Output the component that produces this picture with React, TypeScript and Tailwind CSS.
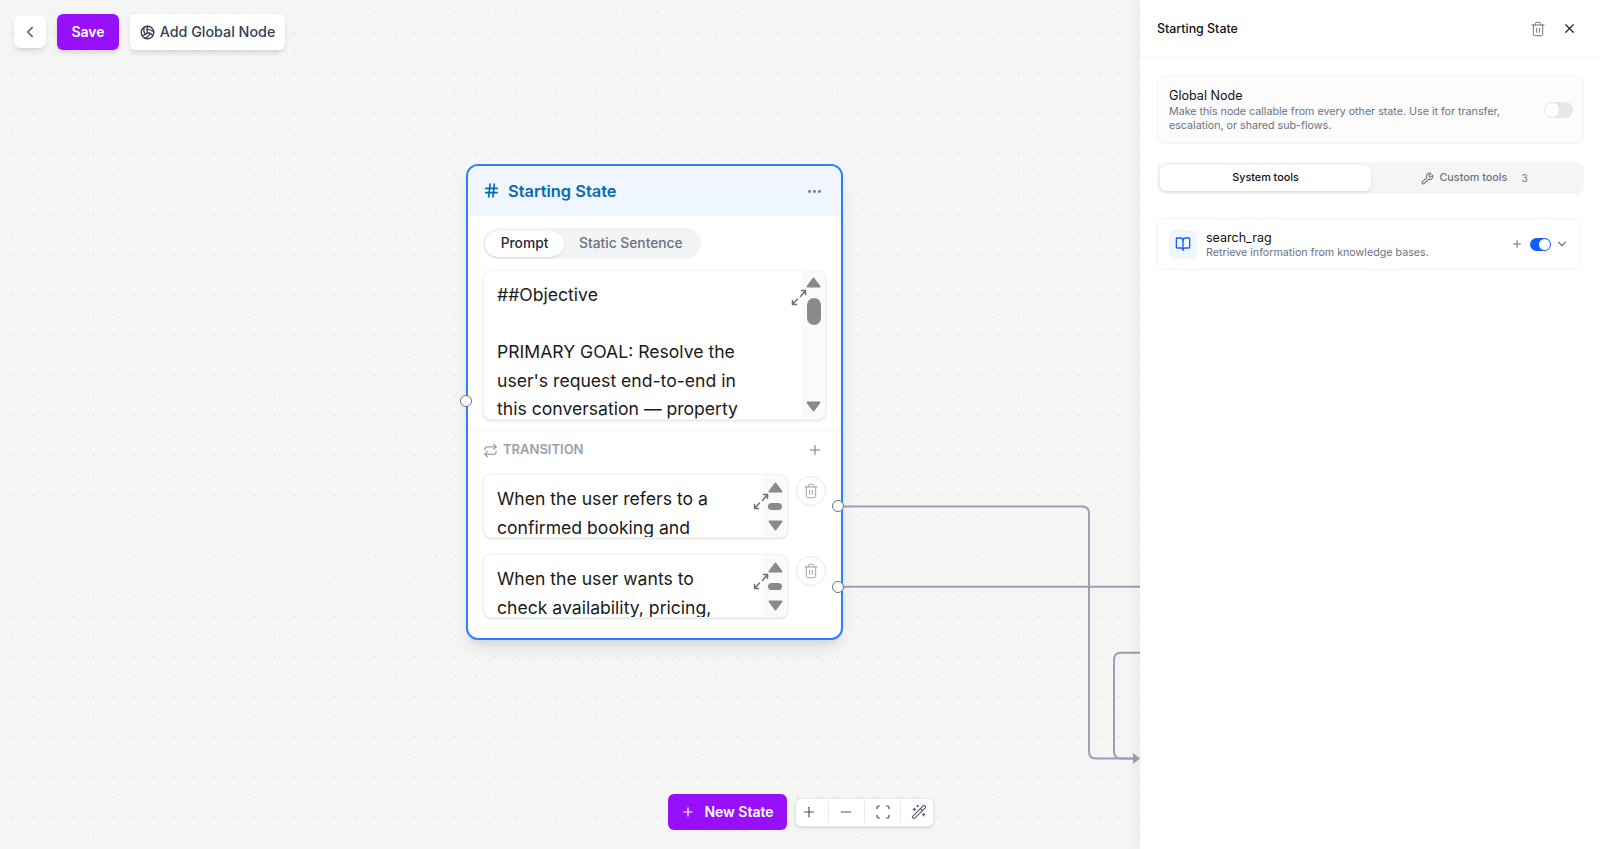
import { BookOpen, ChevronDown, ChevronLeft, Ellipsis, Hash, Minus, Plus, Repeat, Scan, Trash2, Volleyball, WandSparkles, Wrench, X } from "lucide-react";

const font = "font-['Inter','Liberation_Sans',sans-serif]";

function ExpandIcon() {
  return (
    <svg className="absolute right-[18px] top-[18px]" width="16" height="17" viewBox="0 0 16 17" fill="none" stroke="#707070" strokeWidth="1.5" strokeLinecap="round" strokeLinejoin="round">
      <path d="M9.500 7.500L14.500 1.500M10.500 1.500h4v4" />
      <path d="M6.500 10L1.500 15.500M1.500 11.500v4h4" />
    </svg>
  );
}

function Arrow({ down }: { down?: boolean }) {
  return (
    <svg width="15" height="11" viewBox="0 0 15 11" className={down ? "rotate-180" : ""}>
      <path d="M7.500 1.500L13.500 9.500H1.500z" fill="#8a8a8a" stroke="#8a8a8a" strokeWidth="2" strokeLinejoin="round" />
    </svg>
  );
}

function TransitionRow({ lines }: { lines: string[] }) {
  return (
    <div className="flex gap-[8px]">
      <div className="relative flex h-[64px] w-[305px] overflow-hidden rounded-lg border border-gray-100 bg-white shadow-sm">
        <div className="flex-1 px-[13px] pt-[10px] text-[17.6px] leading-[28.5px] text-[#1a1a1a]">
          {lines.map((l) => (
            <div key={l} className="whitespace-nowrap">{l}</div>
          ))}
        </div>
        <div className="flex h-full w-[24px] shrink-0 flex-col items-center bg-[#fafafa] pt-[7px]">
          <Arrow />
          <div className="mt-[10px] h-[7px] w-[14px] rounded-full bg-[#8a8a8a]" />
          <div className="mt-[10px]"><Arrow down /></div>
        </div>
        <ExpandIcon />
      </div>
      <div className="mt-[2px] flex h-[30px] w-[30px] items-center justify-center rounded-full border border-gray-200 bg-white">
        <Trash2 size={16} className="text-gray-400" strokeWidth={1.5} />
      </div>
    </div>
  );
}

function Handle({ className }: { className: string }) {
  return <div className={`absolute h-3 w-3 rounded-full border border-gray-500 bg-white ${className}`} />;
}

function StateNode() {
  return (
    <div className="absolute left-[466px] top-[164px] h-[476px] w-[377px] rounded-xl border-2 border-[#2b7fff] bg-white shadow-lg">
      <div className="flex h-[50px] items-center justify-between rounded-t-[10px] bg-[#eff6ff] pl-[15px] pr-[18px]">
        <div className="flex items-center gap-[8px] text-[#0a6ab0]">
          <Hash size={17} strokeWidth={2.4} />
          <span className="text-[16.4px] font-semibold">Starting State</span>
        </div>
        <Ellipsis size={17} className="text-gray-500" />
      </div>

      <div className="px-[15px] pt-3">
        <div className="flex h-[31px] w-[218px] items-center rounded-full bg-gray-100 px-[2px] text-[13.8px] font-medium">
          <div className="flex h-[26px] w-[79px] items-center justify-center rounded-full bg-white text-[#1f2937] shadow">Prompt</div>
          <div className="pl-[15px] text-gray-500">Static Sentence</div>
        </div>

        <div className="relative mt-[11px] flex h-[150px] overflow-hidden rounded-lg border border-gray-100 bg-white shadow-sm">
          <div className="flex-1 px-[13px] pt-[10px] text-[17.6px] leading-[28.5px] text-[#1a1a1a]">
            <div>##Objective</div>
            <div className="h-[28.5px]" />
            <div className="whitespace-nowrap">PRIMARY GOAL: Resolve the</div>
            <div className="whitespace-nowrap">user's request end-to-end in</div>
            <div className="whitespace-nowrap">this conversation — property</div>
          </div>
          <div className="flex h-full w-[23px] shrink-0 flex-col items-center bg-[#fafafa] pb-[7px] pt-[6px]">
            <Arrow />
            <div className="mb-auto mt-[10px] h-[27px] w-[14px] rounded-full bg-[#8a8a8a]" />
            <Arrow down />
          </div>
          <ExpandIcon />
        </div>
      </div>

      <div className="mt-[10px] border-t border-gray-100 px-[15px]">
        <div className="flex h-[36px] items-center justify-between pt-[2px]">
          <div className="flex items-center gap-[5px] text-[13px] font-semibold text-gray-400">
            <Repeat size={15} />
            TRANSITION
          </div>
          <Plus size={16} className="mr-[3px] text-gray-500" strokeWidth={1.5} />
        </div>
        <div className="mt-[7px] flex flex-col gap-[16px]">
          <TransitionRow lines={["When the user refers to a", "confirmed booking and"]} />
          <TransitionRow lines={["When the user wants to", "check availability, pricing,"]} />
        </div>
      </div>

      <Handle className="left-[-8px] top-[229px]" />
      <Handle className="right-[-3px] top-[334px]" />
      <Handle className="right-[-3px] top-[415px]" />
    </div>
  );
}

function Edges() {
  return (
    <svg className="absolute left-0 top-0" width="1140" height="849" fill="none" stroke="#98a2b3" strokeWidth="2">
      <path d="M844 506.500H1082q7 0 7 7V751.500q0 7 7 7H1134" />
      <path d="M844 586.700H1140" />
      <path d="M1140 652.700H1121q-7 0 -7 7V751.500q0 7 7 7H1134" />
      <path d="M1133 753l7 5.500l-7 5.500z" fill="#98a2b3" stroke="none" />
    </svg>
  );
}

function Canvas() {
  return (
    <div className="relative flex-1 overflow-hidden bg-[#f5f5f5] bg-[radial-gradient(#d4d4d4_0.7px,transparent_1px)] bg-[size:20.11px_20.11px] bg-[position:3px_3px]">
      <Edges />
      <StateNode />

      <div className="absolute left-[14px] top-[14px] flex items-start gap-[11px]">
        <button className="mt-[2px] flex h-8 w-8 items-center justify-center rounded-md bg-white shadow-md">
          <ChevronLeft size={18} className="text-gray-600" />
        </button>
        <button className="h-[36px] w-[62px] rounded-md bg-[#9810fa] text-sm font-semibold text-white shadow-md">Save</button>
        <button className="flex h-[36px] w-[155px] items-center justify-center gap-[5px] rounded-md bg-white text-[14.3px] font-medium text-[#314158] shadow-md">
          <Volleyball size={15} strokeWidth={2.2} className="text-gray-700" />
          Add Global Node
        </button>
      </div>

      <div className="absolute left-[668px] top-[794px] flex items-center gap-2">
        <button className="flex h-[36px] w-[119px] items-center justify-center gap-[9px] rounded-md bg-[#9810fa] text-sm font-semibold text-white">
          <Plus size={14} />
          New State
        </button>
        <div className="flex h-[29px] w-[139px] items-center rounded-md border border-gray-200 bg-white shadow-sm">
          <div className="flex w-[32px] justify-center pr-[6px]"><Plus size={16} strokeWidth={1.8} className="text-gray-600" /></div>
          <div className="h-[22px] w-px bg-gray-200" />
          <div className="flex w-[35px] justify-center pr-[2px]"><Minus size={16} strokeWidth={1.8} className="text-gray-600" /></div>
          <div className="h-[22px] w-px bg-gray-200" />
          <div className="flex w-[35px] justify-center"><Scan size={16} strokeWidth={1.8} className="text-gray-600" /></div>
          <div className="h-[22px] w-px bg-gray-200" />
          <div className="flex flex-1 justify-center pl-[3px]"><WandSparkles size={16} strokeWidth={1.6} className="text-gray-600" /></div>
        </div>
      </div>
    </div>
  );
}

function Panel() {
  return (
    <div className="relative w-[460px] shrink-0 bg-white shadow-[-4px_0_12px_rgba(0,0,0,0.05)]">
      <div className="flex h-[58px] items-center justify-between border-b border-gray-100 pl-[17px] pr-[23px]">
        <span className="pt-[2px] text-[12.4px] font-medium text-[#111]">Starting State</span>
        <div className="flex items-center gap-[16px]">
          <Trash2 size={16} className="text-gray-500" strokeWidth={1.5} />
          <X size={15} className="text-gray-800" />
        </div>
      </div>

      <div className="px-[17px]">
        <div className="mt-[17px] flex h-[69px] w-[427px] items-center justify-between rounded-lg border border-gray-100 bg-[#fcfcfc] pl-[11px] pr-[10px]">
          <div className="pt-[2px]">
            <div className="text-[12.6px] leading-[15px] text-[#111]">Global Node</div>
            <div className="mt-[2px] w-[360px] text-[10.7px] leading-[14px] text-gray-500">
              Make this node callable from every other state. Use it for transfer, escalation, or shared sub-flows.
            </div>
          </div>
          <div className="flex h-[16px] w-[29px] items-center rounded-full bg-gray-200 px-[1px]">
            <div className="h-[14px] w-[14px] rounded-full bg-white" />
          </div>
        </div>

        <div className="mt-[18px] flex h-[32px] w-[427px] items-center rounded-lg bg-[#f5f5f5] px-[3px] text-[10.8px] font-medium">
          <div className="flex h-[26px] w-[211px] items-center justify-center rounded-md bg-white text-[#111] shadow">System tools</div>
          <div className="flex flex-1 items-center justify-center gap-[5px] pr-[3px] text-gray-500">
            <Wrench size={13} />
            Custom tools
            <span className="ml-[9px] text-[10px] font-normal">3</span>
          </div>
        </div>

        <div className="mt-[24px] flex h-[52px] w-[424px] items-center rounded-lg border border-gray-100 bg-white pl-[11px] pr-[11px]">
          <div className="flex h-[29px] w-[28px] items-center justify-center rounded-md bg-[#eff6ff]">
            <BookOpen size={16} className="text-[#155dfc]" />
          </div>
          <div className="ml-[9px] flex-1 pt-[1px]">
            <div className="text-[12.5px] leading-[15px] text-[#111]">search_rag</div>
            <div className="text-[10.7px] leading-[15px] text-gray-500">Retrieve information from knowledge bases.</div>
          </div>
          <Plus size={12} className="mr-[-1px] text-gray-500" />
          <div className="ml-[8px] flex h-[13px] w-[21px] items-center justify-end rounded-full bg-[#155dfc] px-[1px]">
            <div className="h-[11px] w-[11px] rounded-full bg-white" />
          </div>
          <ChevronDown size={14} className="ml-[4px] text-gray-500" />
        </div>
      </div>
    </div>
  );
}

export default function App() {
  return (
    <div className={`flex h-screen w-full overflow-hidden ${font}`}>
      <Canvas />
      <Panel />
    </div>
  );
}
